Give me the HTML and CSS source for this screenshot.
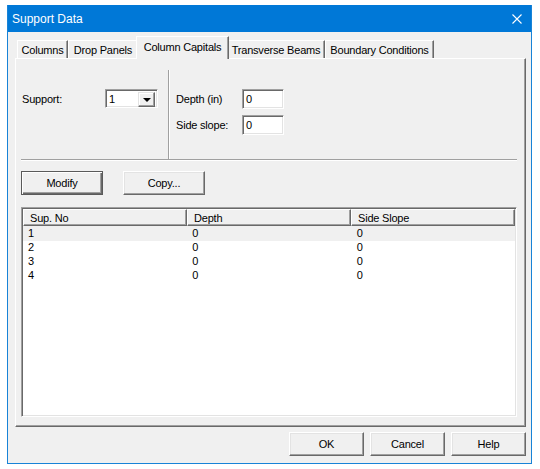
FILE: index.html
```html
<!DOCTYPE html>
<html lang="en">
<head>
<meta charset="UTF-8">
<title>Support Data</title>
<link rel="stylesheet" href="styles.css">
</head>
<body>
<div class="window">
    <div class="titlebar">
        <span class="title">Support Data</span>
        <svg class="close" width="10" height="10" viewBox="0 0 10 10">
            <path d="M0.5 0.5 L9.5 9.5 M9.5 0.5 L0.5 9.5" stroke="#ffffff" stroke-width="1.1" fill="none"/>
        </svg>
    </div>

    <div class="tabs">
        <div class="tab" style="width:51px">Columns</div>
        <div class="tab" style="width:70px">Drop Panels</div>
        <div class="tab active" style="width:93px">Column Capitals</div>
        <div class="tab" style="width:98px">Transverse Beams</div>
        <div class="tab" style="width:109px">Boundary Conditions</div>
    </div>

    <div class="panel">
        <div class="top_row">
            <div class="left_col">
                <span class="label support_label">Support:</span>
                <div class="combo">
                    <span class="combo_value">1</span>
                    <span class="combo_btn"><span class="arrow"></span></span>
                </div>
            </div>
            <div class="right_col">
                <div class="field">
                    <span class="label field_label">Depth (in)</span>
                    <div class="input">0</div>
                </div>
                <div class="field">
                    <span class="label field_label">Side slope:</span>
                    <div class="input">0</div>
                </div>
            </div>
        </div>

        <div class="actions">
            <button class="btn default_btn">Modify</button>
            <button class="btn">Copy...</button>
        </div>

        <div class="list">
            <div class="list_header">
                <div class="hcell">Sup. No</div>
                <div class="hcell">Depth</div>
                <div class="hcell">Side Slope</div>
            </div>
            <div class="list_row selected">
                <div class="cell">1</div><div class="cell">0</div><div class="cell">0</div>
            </div>
            <div class="list_row">
                <div class="cell">2</div><div class="cell">0</div><div class="cell">0</div>
            </div>
            <div class="list_row">
                <div class="cell">3</div><div class="cell">0</div><div class="cell">0</div>
            </div>
            <div class="list_row">
                <div class="cell">4</div><div class="cell">0</div><div class="cell">0</div>
            </div>
        </div>
    </div>

    <div class="dialog_buttons">
        <button class="btn wide">OK</button>
        <button class="btn wide">Cancel</button>
        <button class="btn wide">Help</button>
    </div>
</div>
</body>
</html>
```
FILE: styles.css
```css
body {
    margin: 0;
    background-color: #ffffff;
    font-family: "Liberation Sans", Arial, sans-serif;
    font-size: 11px;
    letter-spacing: -0.2px;
    color: #000000;
}
.window {
    box-sizing: border-box;
    width: 525px;
    height: 459px;
    margin: 5px 0 0 7px;
    border: 1px solid #1883d7;
    border-top: none;
    background-color: #f0f0f0;
}
.titlebar {
    height: 27px;
    background-color: #0078d7;
    display: flex;
    align-items: center;
    justify-content: space-between;
    padding: 0 9px 0 4px;
}
.title {
    color: #ffffff;
    font-size: 12px;
    letter-spacing: 0;
}
.close {
    display: block;
}

/* tab strip */
.tabs {
    display: flex;
    align-items: flex-end;
    height: 26px;
    margin-left: 9px;
}
.tab {
    box-sizing: border-box;
    height: 18px;
    padding-top: 3px;
    text-align: center;
    white-space: nowrap;
    border-top: 1px solid #ffffff;
    border-left: 1px solid #ffffff;
    border-right: 1px solid #696969;
    box-shadow: inset -1px 0 0 #a0a0a0;
    background-color: #f0f0f0;
}
.tab.active {
    height: 23px;
    margin: 0 -2px -1px -2px;
    padding-top: 4px;
    position: relative;
    z-index: 1;
}

.panel {
    box-sizing: border-box;
    width: 511px;
    height: 369px;
    margin-left: 7px;
    border-top: 1px solid #ffffff;
    border-left: 1px solid #ffffff;
    border-right: 1px solid #696969;
    border-bottom: 1px solid #696969;
    box-shadow: inset -1px -1px 0 #a0a0a0;
    padding: 11px 0 0 5px;
}
.top_row {
    display: flex;
    width: 496px;
    height: 89px;
    border-bottom: 1px solid #a0a0a0;
    box-shadow: 0 1px 0 #ffffff;
}
.left_col {
    width: 147px;
    display: flex;
    align-items: flex-start;
    padding-top: 19px;
    border-right: 1px solid #a0a0a0;
    box-shadow: 1px 0 0 #ffffff;
}
.label {
    line-height: 20px;
}
.support_label {
    width: 83px;
    padding-left: 1px;
}
.combo {
    box-sizing: border-box;
    width: 53px;
    height: 19px;
    display: flex;
    background-color: #ffffff;
    border-top: 1px solid #a0a0a0;
    border-left: 1px solid #a0a0a0;
    border-right: 1px solid #ffffff;
    border-bottom: 1px solid #ffffff;
    box-shadow: inset 1px 1px 0 #696969, inset -1px -1px 0 #e3e3e3;
    padding: 2px;
}
.combo_value {
    flex: 1;
    line-height: 14px;
    padding-left: 1px;
}
.combo_btn {
    box-sizing: border-box;
    width: 17px;
    height: 15px;
    display: flex;
    align-items: center;
    justify-content: center;
    background-color: #f0f0f0;
    border-top: 1px solid #e3e3e3;
    border-left: 1px solid #e3e3e3;
    border-right: 1px solid #696969;
    border-bottom: 1px solid #696969;
    box-shadow: inset -1px -1px 0 #a0a0a0, inset 1px 1px 0 #ffffff;
}
.arrow {
    width: 0;
    height: 0;
    border-left: 4px solid transparent;
    border-right: 4px solid transparent;
    border-top: 4px solid #000000;
    margin-top: 1px;
}
.right_col {
    padding: 19px 0 0 7px;
    display: flex;
    flex-direction: column;
    gap: 6px;
}
.field {
    display: flex;
}
.field_label {
    width: 66px;
}
.input {
    box-sizing: border-box;
    width: 42px;
    height: 20px;
    padding: 2px 0 0 3px;
    line-height: 14px;
    background-color: #ffffff;
    border-top: 1px solid #a0a0a0;
    border-left: 1px solid #a0a0a0;
    border-right: 1px solid #ffffff;
    border-bottom: 1px solid #ffffff;
    box-shadow: inset 1px 1px 0 #696969, inset -1px -1px 0 #e3e3e3;
}

/* buttons */
.btn {
    box-sizing: border-box;
    width: 82px;
    height: 24px;
    font-family: "Liberation Sans", Arial, sans-serif;
    font-size: 11px;
    letter-spacing: -0.2px;
    color: #000000;
    background-color: #f0f0f0;
    border-top: 1px solid #ffffff;
    border-left: 1px solid #ffffff;
    border-right: 1px solid #696969;
    border-bottom: 1px solid #696969;
    box-shadow: inset -1px -1px 0 #a0a0a0, inset 1px 1px 0 #e3e3e3;
    padding: 0;
}
.default_btn {
    border: 1px solid #5a5a5a;
    box-shadow: inset 1px 1px 0 #ffffff, inset -1px -1px 0 #696969, inset -2px -2px 0 #a0a0a0;
}
.actions {
    display: flex;
    gap: 20px;
    margin-top: 11px;
}

/* list view */
.list {
    box-sizing: border-box;
    width: 496px;
    height: 210px;
    margin-top: 12px;
    background-color: #ffffff;
    border-top: 1px solid #a0a0a0;
    border-left: 1px solid #a0a0a0;
    border-right: 1px solid #ffffff;
    border-bottom: 1px solid #ffffff;
    box-shadow: inset 1px 1px 0 #696969, inset -1px -1px 0 #e3e3e3;
    padding: 1px;
}
.list_header {
    display: flex;
}
.hcell {
    box-sizing: border-box;
    width: 164px;
    height: 17px;
    padding: 2px 0 0 6px;
    background-color: #f0f0f0;
    border-top: 1px solid #ffffff;
    border-left: 1px solid #ffffff;
    border-right: 1px solid #696969;
    border-bottom: 1px solid #696969;
    box-shadow: inset -1px -1px 0 #a0a0a0;
}
.list_row {
    display: flex;
    height: 14px;
    line-height: 14px;
}
.list_row.selected {
    height: 15px;
    line-height: 15px;
    margin-bottom: -1px;
    background-color: #f0f0f0;
}
.cell {
    width: 164px;
    padding-left: 5px;
}
.cell + .cell {
    padding-left: 6px;
}

.dialog_buttons {
    display: flex;
    justify-content: flex-end;
    gap: 6px;
    width: 511px;
    margin: 5px 0 0 7px;
}
.btn.wide {
    width: 75px;
}
```
